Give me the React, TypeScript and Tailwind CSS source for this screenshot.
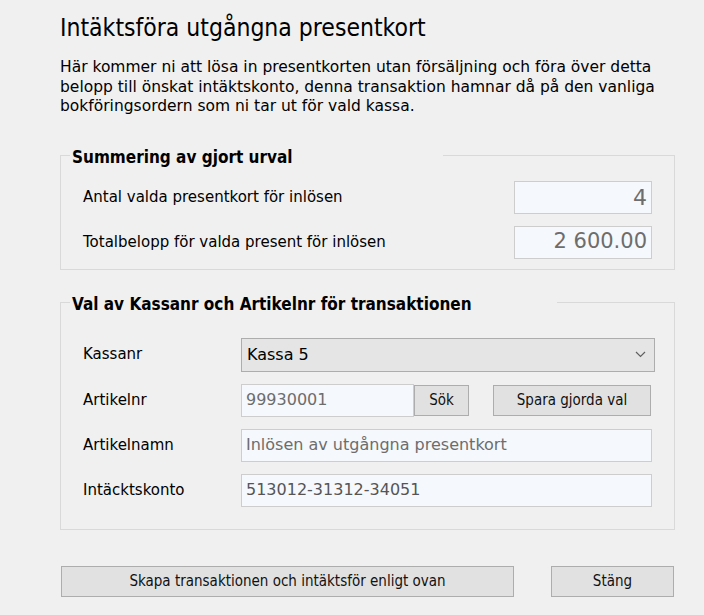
import React from 'react';

const inputCls =
    'h-[33px] border border-[#cdcdcd] bg-[#f5f8fc] text-[#6d6d6d] flex items-center px-[4px] text-[16px] font-[family-name:"DejaVu_Sans",sans-serif]';
const buttonCls =
    'border border-[#adadad] bg-[#e1e1e1] text-[#111] text-[15px] flex items-center justify-center';
const labelCls = 'text-[15px] font-[family-name:"DejaVu_Sans",sans-serif]';

const GroupBox: React.FC<{ title: string; titleWidth: string; className: string; children: React.ReactNode }> = ({
    title,
    titleWidth,
    className,
    children,
}) => (
    <div className={`relative border border-[#d9d9d9] ${className}`}>
        <div
            className={`absolute left-[9px] top-[-9px] ${titleWidth} bg-[#f0f0f0] pl-[2px] text-[17px] leading-[20px] font-bold text-black`}
        >
            {title}
        </div>
        {children}
    </div>
);

const FieldRow: React.FC<{ label: string; children: React.ReactNode }> = ({ label, children }) => (
    <div className="flex items-center">
        <div className={`w-[158px] text-black ${labelCls}`}>{label}</div>
        {children}
    </div>
);

export default function App() {
    return (
        <div className="w-[704px] h-[615px] bg-[#f0f0f0] pt-[12px] pl-[60px] pr-[29px] font-[family-name:'DejaVu_Sans_Condensed','DejaVu_Sans',sans-serif] text-black overflow-hidden">
            <h1 className="text-[24.5px] leading-[32px] font-normal">Intäktsföra utgångna presentkort</h1>
            <p className="mt-[14px] text-[15.5px] leading-[19.5px] whitespace-nowrap font-[family-name:'DejaVu_Sans',sans-serif]">
                Här kommer ni att lösa in presentkorten utan försäljning och föra över detta
                <br />
                belopp till önskat intäktskonto, denna transaktion hamnar då på den vanliga
                <br />
                bokföringsordern som ni tar ut för vald kassa.
            </p>

            {/* summary of the selection */}
            <GroupBox title="Summering av gjort urval" titleWidth="w-[373px]" className="mt-[38px] pt-[25px] pb-[10px] pl-[22px] pr-[22px]">
                <div className="flex flex-col gap-[12px]">
                    <div className="flex items-center justify-between">
                        <span className={labelCls}>Antal valda presentkort för inlösen</span>
                        <div className={`${inputCls} w-[138px] justify-end text-[22px]`}>4</div>
                    </div>
                    <div className="flex items-center justify-between">
                        <span className={labelCls}>Totalbelopp för valda present för inlösen</span>
                        <div className={`${inputCls} w-[138px] justify-end text-[21px]`}>2 600.00</div>
                    </div>
                </div>
            </GroupBox>

            {/* register and article */}
            <GroupBox
                title="Val av Kassanr och Artikelnr för transaktionen"
                titleWidth="w-[487px]"
                className="mt-[32px] pt-[35px] pb-[22px] pl-[22px] pr-[22px]"
            >
                <div className="flex flex-col gap-[12px]">
                    <FieldRow label="Kassanr">
                        <div className="w-[414px] h-[34px] border border-[#adadad] bg-[#e5e5e5] flex items-center justify-between pl-[5px] pr-[8px] text-[16px] text-black -mr-[3px] font-[family-name:'DejaVu_Sans',sans-serif]">
                            <span>Kassa 5</span>
                            <svg width="11" height="7" viewBox="0 0 11 7" fill="none">
                                <path d="M1 1l4.5 4.5L10 1" stroke="#606060" strokeWidth="1.2" />
                            </svg>
                        </div>
                    </FieldRow>
                    <FieldRow label="Artikelnr">
                        <div className={`${inputCls} w-[173px]`}>99930001</div>
                        <div className={`${buttonCls} w-[55px] h-[31px]`}>Sök</div>
                        <div className={`${buttonCls} w-[158px] h-[31px] ml-[24px]`}>Spara gjorda val</div>
                    </FieldRow>
                    <FieldRow label="Artikelnamn">
                        <div className={`${inputCls} w-[411px]`}>Inlösen av utgångna presentkort</div>
                    </FieldRow>
                    <FieldRow label="Intäcktskonto">
                        <div className={`${inputCls} w-[411px] text-[#555]`}>513012-31312-34051</div>
                    </FieldRow>
                </div>
            </GroupBox>

            <div className="mt-[36px] flex items-center">
                <div className={`${buttonCls} ml-[1px] w-[453px] h-[31px]`}>Skapa transaktionen och intäktsför enligt ovan</div>
                <div className={`${buttonCls} ml-[37px] w-[123px] h-[31px]`}>Stäng</div>
            </div>
        </div>
    );
}
